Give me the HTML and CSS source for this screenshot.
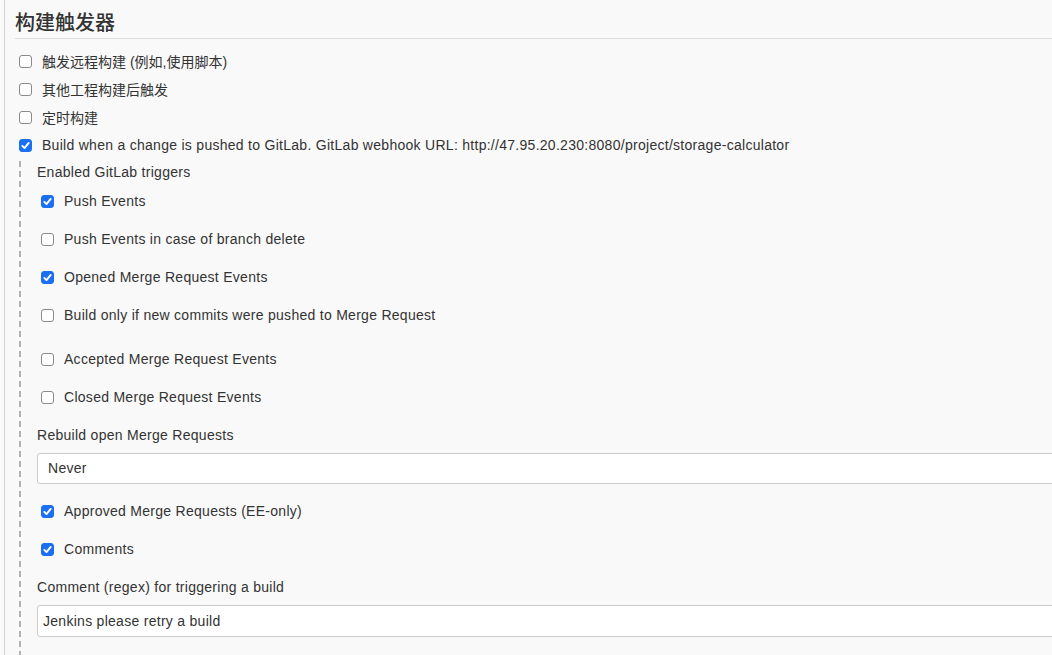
FILE: index.html
```html
<!DOCTYPE html>
<html lang="zh">
<head>
<meta charset="utf-8">
<title>构建触发器</title>
<link rel="stylesheet" href="styles.css">
</head>
<body>
<div class="page">
  <h2 class="title">构建触发器</h2>
  <div class="top-list">
    <label class="row"><span class="cb"></span><span class="txt cjk">触发远程构建 (例如,使用脚本)</span></label>
    <label class="row"><span class="cb"></span><span class="txt cjk">其他工程构建后触发</span></label>
    <label class="row"><span class="cb"></span><span class="txt cjk">定时构建</span></label>
    <label class="row"><span class="cb on"><svg viewBox="0 0 13 13" width="13" height="13"><path d="M3.3 6.9 L5.5 9.1 L9.7 3.9" fill="none" stroke="#fff" stroke-width="1.9" stroke-linecap="round" stroke-linejoin="round"/></svg></span><span class="txt">Build when a change is pushed to GitLab. GitLab webhook URL: http://47.95.20.230:8080/project/storage-calculator</span></label>
  </div>
  <div class="nested">
    <div class="lbl">Enabled GitLab triggers</div>
    <label class="row2"><span class="cb on"><svg viewBox="0 0 13 13" width="13" height="13"><path d="M3.3 6.9 L5.5 9.1 L9.7 3.9" fill="none" stroke="#fff" stroke-width="1.9" stroke-linecap="round" stroke-linejoin="round"/></svg></span><span class="txt">Push Events</span></label>
    <label class="row2"><span class="cb"></span><span class="txt">Push Events in case of branch delete</span></label>
    <label class="row2"><span class="cb on"><svg viewBox="0 0 13 13" width="13" height="13"><path d="M3.3 6.9 L5.5 9.1 L9.7 3.9" fill="none" stroke="#fff" stroke-width="1.9" stroke-linecap="round" stroke-linejoin="round"/></svg></span><span class="txt">Opened Merge Request Events</span></label>
    <label class="row2"><span class="cb"></span><span class="txt">Build only if new commits were pushed to Merge Request</span></label>
    <label class="row2 gap-top"><span class="cb"></span><span class="txt">Accepted Merge Request Events</span></label>
    <label class="row2"><span class="cb"></span><span class="txt">Closed Merge Request Events</span></label>
    <div class="lbl gap-top">Rebuild open Merge Requests</div>
    <div class="field select">Never</div>
    <label class="row2 after-field"><span class="cb on"><svg viewBox="0 0 13 13" width="13" height="13"><path d="M3.3 6.9 L5.5 9.1 L9.7 3.9" fill="none" stroke="#fff" stroke-width="1.9" stroke-linecap="round" stroke-linejoin="round"/></svg></span><span class="txt">Approved Merge Requests (EE-only)</span></label>
    <label class="row2"><span class="cb on"><svg viewBox="0 0 13 13" width="13" height="13"><path d="M3.3 6.9 L5.5 9.1 L9.7 3.9" fill="none" stroke="#fff" stroke-width="1.9" stroke-linecap="round" stroke-linejoin="round"/></svg></span><span class="txt">Comments</span></label>
    <div class="lbl gap-top">Comment (regex) for triggering a build</div>
    <div class="field text">Jenkins please retry a build</div>
  </div>
</div>
</body>
</html>
```

FILE: styles.css
```css
html, body {
  margin: 0;
  padding: 0;
  background: #f9f9f9;
  overflow: hidden;
}
body {
  font-family: "Liberation Sans", Arial, "Noto Sans CJK SC", sans-serif;
  font-size: 14px;
  letter-spacing: 0.28px;
  color: #333;
  height: 655px;
}
.page {
  margin-left: 4px;
  border-left: 1px solid #d2d2d2;
  padding-left: 10px;
  height: 655px;
  box-sizing: border-box;
  overflow: hidden;
}
.title {
  margin: 0;
  padding-top: 10px;
  padding-bottom: 4px;
  font-size: 20px;
  line-height: 24px;
  font-weight: 500;
  letter-spacing: 0;
  font-family: "Noto Sans CJK SC", sans-serif;
  color: #333;
  border-bottom: 1px solid #ddd;
}
.top-list {
  margin-top: 8px;
  display: flex;
  flex-direction: column;
}
.row, .row2 {
  display: flex;
  align-items: center;
  white-space: nowrap;
}
.row {
  height: 28px;
  padding-left: 4px;
  gap: 10px;
}
.cjk {
  letter-spacing: 0;
}
.cb {
  width: 13px;
  height: 13px;
  box-sizing: border-box;
  border: 1px solid #8a8a8a;
  border-radius: 3px;
  background: #fff;
  flex: none;
  display: flex;
}
.cb.on {
  border-color: #1a6ff3;
  background: #1a6ff3;
}
.cb svg {
  margin: -1px;
  flex: none;
}
.nested {
  margin-left: 4px;
  padding-left: 18px;
  display: flex;
  flex-direction: column;
  height: 496px;
  background-image: repeating-linear-gradient(to bottom, #b2b2b2 0, #b2b2b2 6px, transparent 6px, transparent 10px);
  background-size: 2px 100%;
  background-repeat: no-repeat;
  background-position: 0 2px;
}
.lbl {
  padding-top: 3px;
  height: 20px;
  line-height: 20px;
  white-space: nowrap;
}
.row2 {
  height: 38px;
  padding-left: 4px;
  gap: 10px;
}
.gap-top {
  margin-top: 6px;
}
.field {
  box-sizing: border-box;
  width: 1100px;
  flex: none;
  background: #fff;
  border: 1px solid #ccc;
  border-radius: 3px;
  white-space: nowrap;
}
.select {
  margin-top: 8px;
  height: 31px;
  line-height: 29px;
  padding-left: 10px;
}
.after-field {
  margin-top: 8px;
}
.text {
  margin-top: 8px;
  height: 32px;
  line-height: 30px;
  padding-left: 5px;
}
```
